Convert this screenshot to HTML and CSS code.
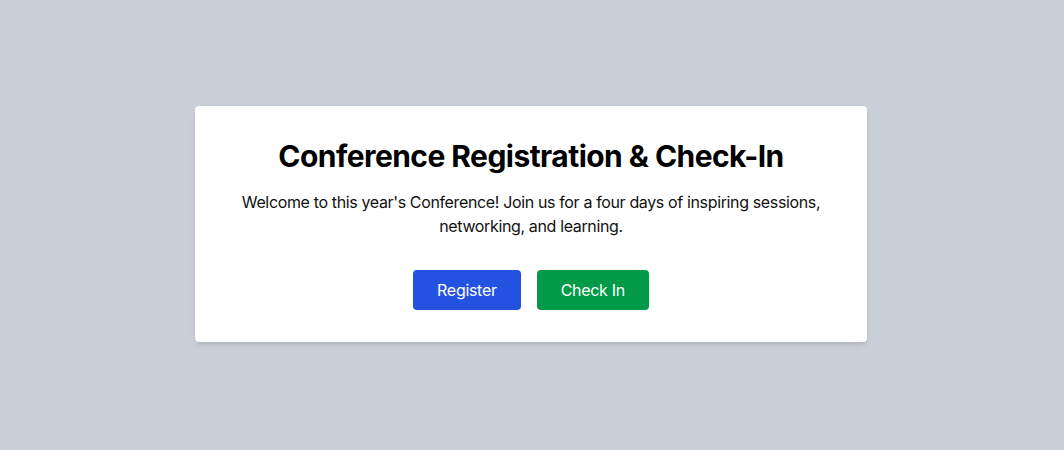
FILE: index.html
```html
<!DOCTYPE html>
<html lang="en">
<head>
<meta charset="utf-8">
<title>Conference Registration & Check-In</title>
<link rel="stylesheet" href="styles.css">
</head>
<body>
<main class="page">
  <section class="card">
    <h1 class="title">Conference Registration &amp; Check-In</h1>
    <p class="intro">Welcome to this year's Conference! Join us for a four days of inspiring sessions, networking, and learning.</p>
    <div class="actions">
      <button class="btn btn-blue">Register</button>
      <button class="btn btn-green">Check In</button>
    </div>
  </section>
</main>
</body>
</html>
```
FILE: styles.css
```css
* { box-sizing: border-box; }
html, body { margin: 0; padding: 0; }
body {
  background: #cbd0d8;
  font-family: Inter, "Noto Sans", "Liberation Sans", sans-serif;
  color: #111;
}
.page {
  min-height: 448px;
  width: 1062px;
  display: flex;
  align-items: center;
  justify-content: center;
}
.card {
  width: 672px;
  background: #fff;
  border-radius: 4px;
  box-shadow: 0 4px 6px -1px rgba(0,0,0,0.1), 0 2px 4px -2px rgba(0,0,0,0.1);
  padding: 32px;
  text-align: center;
}
.title {
  margin: 0 0 16px;
  font-size: 30px;
  line-height: 36px;
  font-weight: 700;
  color: #000;
  letter-spacing: -0.55px;
}
.intro {
  margin: 0 auto 32px;
  max-width: 608px;
  font-size: 16px;
  line-height: 24px;
  color: #111;
  letter-spacing: -0.36px;
}
.actions {
  display: flex;
  justify-content: center;
  gap: 16px;
}
.btn {
  border: 0;
  border-radius: 4px;
  padding: 8px 24px;
  font-family: inherit;
  font-size: 16px;
  line-height: 24px;
  letter-spacing: -0.3px;
  color: #fff;
  cursor: pointer;
}
.btn-blue { background: #2452e0; }
.btn-green { background: #009a48; }
```
